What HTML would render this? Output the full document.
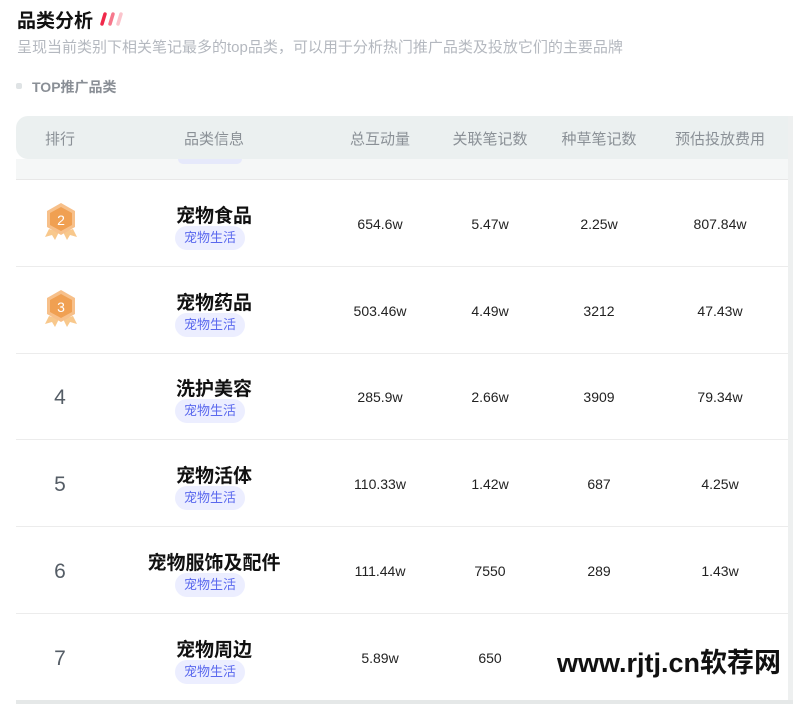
<!DOCTYPE html>
<html><head><meta charset="utf-8"><style>
*{margin:0;padding:0;box-sizing:border-box}
body{width:793px;height:704px;background:#fff;font-family:"Liberation Sans","Noto Sans CJK SC",sans-serif;position:relative;overflow:hidden}
.abs{position:absolute}
.h1{left:17px;top:6px;font-size:19px;font-weight:bold;color:#111}
.sub{left:17px;top:36px;font-size:15px;color:#b4b8bf;white-space:nowrap}
.sec{left:32px;top:77px;font-size:14px;color:#8a8f96;font-weight:bold}
.hdr{left:16px;top:116px;width:780px;height:43px;background:#ebf0f0;border-radius:12px 0 0 12px}
.hdr span{position:absolute;top:12px;font-size:15px;color:#8a9096;transform:translateX(-50%);white-space:nowrap}
.strip{left:16px;top:159px;width:772px;height:21px;background:#f5f7f7;border-bottom:1px solid #e8e8e8}
.row{position:absolute;left:16px;width:772px;height:87px;border-bottom:1px solid #ececec}
.c{position:absolute;top:36px;font-size:14px;color:#222;transform:translateX(-50%);white-space:nowrap}
.name{position:absolute;top:21px;font-size:19px;font-weight:bold;color:#111;transform:translateX(-50%);white-space:nowrap}
.tag{position:absolute;top:46px;left:159px;width:70px;height:24px;border-radius:12px;background:#eceeff;color:#5a68ee;font-size:13px;text-align:center;line-height:24px}
.rk{position:absolute;left:44px;top:33px;font-size:21px;color:#555d66;transform:translateX(-50%)}
.rbar{left:788px;top:116px;width:5px;height:588px;background:#eef0f0}
.bot{left:16px;top:700px;width:777px;height:4px;background:#e5e8e8}
</style></head><body>
<div class="abs h1">品类分析 <svg width="26" height="14" style="vertical-align:1px"><path d="M4 12 L7 2" stroke="#f0284a" stroke-width="3.5" stroke-linecap="round"/><path d="M12 12 L15 2" stroke="#f6788c" stroke-width="3.5" stroke-linecap="round"/><path d="M20 12 L23 2" stroke="#fbc4cc" stroke-width="3.5" stroke-linecap="round"/></svg></div>
<div class="abs sub">呈现当前类别下相关笔记最多的top品类，可以用于分析热门推广品类及投放它们的主要品牌</div>
<div class="abs" style="left:16px;top:83px;width:6px;height:6px;border-radius:2px;background:#dfe3e5"></div>
<div class="abs sec">TOP推广品类</div>
<div class="abs hdr">
<span style="left:44px">排行</span><span style="left:198px">品类信息</span><span style="left:364px">总互动量</span><span style="left:474px">关联笔记数</span><span style="left:583px">种草笔记数</span><span style="left:704px">预估投放费用</span>
</div>
<div class="abs strip"></div>
<div class="abs" style="left:178px;top:159px;width:64px;height:5px;background:#e6e9fb;border-radius:0 0 10px 10px"></div>

<div class="row" style="top:180px">
<svg class="abs" style="left:27px;top:21px" width="36" height="40" viewBox="0 0 36 40"><path d="M6 28 L2 36 L9 34 L12 39 L16 31Z M30 28 L34 36 L27 34 L24 39 L20 31Z" fill="#f8c88c"/><path d="M18 2 L32 10 L32 26 L18 34 L4 26 L4 10Z" fill="#f7c08a"/><path d="M18 6 L29 12 L29 24 L18 30 L7 24 L7 12Z" fill="#f0a052"/><text x="18" y="24" font-size="14" fill="#fff" text-anchor="middle" font-family="Liberation Sans">2</text></svg>
<div class="name" style="left:198px">宠物食品</div><div class="tag">宠物生活</div>
<div class="c" style="left:364px">654.6w</div><div class="c" style="left:474px">5.47w</div><div class="c" style="left:583px">2.25w</div><div class="c" style="left:704px">807.84w</div></div>

<div class="row" style="top:267px">
<svg class="abs" style="left:27px;top:21px" width="36" height="40" viewBox="0 0 36 40"><path d="M6 28 L2 36 L9 34 L12 39 L16 31Z M30 28 L34 36 L27 34 L24 39 L20 31Z" fill="#f8c88c"/><path d="M18 2 L32 10 L32 26 L18 34 L4 26 L4 10Z" fill="#f7c08a"/><path d="M18 6 L29 12 L29 24 L18 30 L7 24 L7 12Z" fill="#f0a052"/><text x="18" y="24" font-size="14" fill="#fff" text-anchor="middle" font-family="Liberation Sans">3</text></svg>
<div class="name" style="left:198px">宠物药品</div><div class="tag">宠物生活</div>
<div class="c" style="left:364px">503.46w</div><div class="c" style="left:474px">4.49w</div><div class="c" style="left:583px">3212</div><div class="c" style="left:704px">47.43w</div></div>

<div class="row" style="top:353px"><div class="rk">4</div>
<div class="name" style="left:198px">洗护美容</div><div class="tag">宠物生活</div>
<div class="c" style="left:364px">285.9w</div><div class="c" style="left:474px">2.66w</div><div class="c" style="left:583px">3909</div><div class="c" style="left:704px">79.34w</div></div>

<div class="row" style="top:440px"><div class="rk">5</div>
<div class="name" style="left:198px">宠物活体</div><div class="tag">宠物生活</div>
<div class="c" style="left:364px">110.33w</div><div class="c" style="left:474px">1.42w</div><div class="c" style="left:583px">687</div><div class="c" style="left:704px">4.25w</div></div>

<div class="row" style="top:527px"><div class="rk">6</div>
<div class="name" style="left:198px">宠物服饰及配件</div><div class="tag">宠物生活</div>
<div class="c" style="left:364px">111.44w</div><div class="c" style="left:474px">7550</div><div class="c" style="left:583px">289</div><div class="c" style="left:704px">1.43w</div></div>

<div class="row" style="top:614px;border-bottom:none"><div class="rk">7</div>
<div class="name" style="left:198px">宠物周边</div><div class="tag">宠物生活</div>
<div class="c" style="left:364px">5.89w</div><div class="c" style="left:474px">650</div></div>
<div class="abs" style="left:557px;top:641px;font-size:27px;font-weight:bold;color:#111;white-space:nowrap">www.rjtj.cn软荐网</div>
<div class="abs rbar"></div>
<div class="abs bot"></div>
</body></html>
